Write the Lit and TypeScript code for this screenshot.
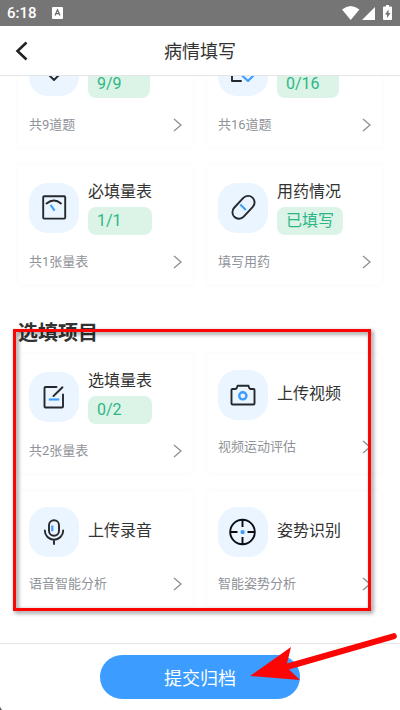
import { LitElement, html, css, svg, nothing, TemplateResult } from "lit";
import { customElement, property } from "lit/decorators.js";

const ICONS: Record<string, TemplateResult> = {
  shield: svg`<path d="M15 15l10-3 10 3v9L25 34 15 24z" /><path class="blue" d="M21 20l3 3 5-5" />`,
  checklist: svg`<path d="M34 21v-8H14v22h9" /><path class="blue" d="M24 29.5l6 5.5 6-6" />`,
  scale: svg`<rect x="14.2" y="13.2" width="22" height="22.4" rx="1" /><path d="M17.5 20.5Q25 14.5 32 20.5" /><path class="blue" d="M21.6 22l4 5.6" />`,
  pill: svg`<rect x="12.3" y="17.8" width="26.4" height="13" rx="6.5" transform="rotate(-47 25.5 24.3)" /><path class="blue" d="M22.3 21.6l5.6 5.4" />`,
  edit: svg`<path d="M27.5 15H16.5q-1 0-1 1V34.5q0 1 1 1H33q1 0 1-1V22.5" /><path d="M33.5 15.3l-9 8.7" /><path class="blue" d="M19.8 27.5h10.5" />`,
  camera: svg`<path d="M14.5 19h3q1.5-.5 2-3.2h11q.5 2.700 2 3.200h3q1 0 1 1V33.500q0 1-1 1h-21q-1 0-1-1V20q0-1 1-1z" /><circle class="blue thick" cx="24.800" cy="25.800" r="3.600" />`,
  mic: svg`<rect x="20" y="13.300" width="10" height="15.500" rx="5" /><path d="M15.800 23.500a9.200 9.200 0 0 0 18.400 0M25 32.700V37" /><path class="blue" d="M23.300 18.500v5.700" />`,
  target: svg`<g class="black"><circle cx="24.500" cy="25" r="12.300" /><path d="M24.500 13v7M24.500 30v7M12.500 25h7M29.500 25h7" /></g><rect class="dot" x="22.700" y="23.200" width="3.800" height="3.800" rx="1" />`,
};

@customElement("task-card")
class TaskCard extends LitElement {
  @property() icon = "";
  @property() name = "";
  @property() badge = "";
  @property() note = "";

  static styles = css`
    :host { display: block; }
    .card {
      display: block;
      box-sizing: border-box;
      height: 100%;
      padding: 16px 11px 12px;
      border-radius: 4px;
      background: #fff;
      box-shadow: 0 0 7px rgba(0, 0, 0, 0.03);
      color: #333;
      text-decoration: none;
    }
    .head { display: flex; align-items: center; gap: 9px; margin-bottom: 17px; }
    .tile { flex: none; width: 50px; height: 50px; border-radius: 19px; background: #eaf5ff; }
    .tile svg {
      display: block;
      fill: none;
      stroke: #25282c;
      stroke-width: 1.9;
      stroke-linecap: round;
      stroke-linejoin: round;
    }
    .tile .blue { stroke: #3c9cff; stroke-width: 2.1; stroke-linecap: butt; }
    .tile .thick { stroke-width: 2.4; }
    .tile .black { stroke: #0b0d12; stroke-linecap: butt; }
    .tile .dot { fill: #3c9cff; stroke: none; }
    .text { display: flex; flex-direction: column; gap: 4px; }
    .plain { padding-bottom: 2px; }
    .name { min-height: 22px; font-size: 16px; line-height: 22px; white-space: nowrap; }
    .badge {
      box-sizing: border-box;
      min-width: 62px;
      padding: 0 9px;
      border-radius: 8px;
      background: #dcf3e8;
      color: #2bb785;
      font-size: 16px;
      line-height: 28px;
      white-space: nowrap;
    }
    .foot {
      display: flex;
      align-items: center;
      justify-content: space-between;
      color: #909399;
      font-size: 13px;
      line-height: 20px;
    }
    .foot svg { fill: none; stroke: #8d9095; stroke-width: 1.3; }
  `;

  render() {
    return html`<a class="card" href="#">
      <div class="head">
        <span class="tile"><svg width="50" height="50" viewBox="0 0 50 50">${ICONS[this.icon]}</svg></span>
        <div class="text ${this.badge ? "" : "plain"}">
          <span class="name">${this.name}</span>
          ${this.badge ? html`<span class="badge">${this.badge}</span>` : nothing}
        </div>
      </div>
      <div class="foot">
        <span>${this.note}</span>
        <svg width="9" height="14" viewBox="0 0 9 14"><path d="M1 1l7 6-7 6" /></svg>
      </div>
    </a>`;
  }
}

const REQUIRED = [
  { icon: "shield", name: "", badge: "9/9", note: "共9道题" },
  { icon: "checklist", name: "", badge: "0/16", note: "共16道题" },
  { icon: "scale", name: "必填量表", badge: "1/1", note: "共1张量表" },
  { icon: "pill", name: "用药情况", badge: "已填写", note: "填写用药" },
];
const OPTIONAL = [
  { icon: "edit", name: "选填量表", badge: "0/2", note: "共2张量表" },
  { icon: "camera", name: "上传视频", badge: "", note: "视频运动评估" },
  { icon: "mic", name: "上传录音", badge: "", note: "语音智能分析" },
  { icon: "target", name: "姿势识别", badge: "", note: "智能姿势分析" },
];

@customElement("app-root")
class AppRoot extends LitElement {
  static styles = css`
    :host {
      display: flex;
      flex-direction: column;
      height: 100vh;
      overflow: hidden;
      background: #fff;
      color: #333;
      font-family: Roboto, "Noto Sans CJK SC", sans-serif;
    }
    .status {
      flex: none;
      display: flex;
      align-items: center;
      height: 26px;
      padding: 0 7px;
      background: #757575;
      color: #fff;
      font-size: 15px;
      font-weight: 500;
      line-height: 26px;
    }
    .input-mode { margin-left: 15px; }
    .signals { margin-left: auto; }
    .bar {
      flex: none;
      display: grid;
      grid-template-columns: 44px 1fr 44px;
      align-items: center;
      height: 49px;
      border-bottom: 1px solid #e6e6e6;
    }
    .back { padding: 0 0 0 15px; border: 0; background: none; height: 44px; }
    .back svg { display: block; fill: none; stroke: #222; stroke-width: 2.6; }
    h1 { margin: 0; padding-top: 2px; font-size: 18px; font-weight: 400; line-height: 28px; text-align: center; }
    main { flex: 1; min-height: 0; overflow-y: auto; padding: 0 18px 37px; scrollbar-width: none; }
    .cards { display: grid; grid-template-columns: 1fr 1fr; gap: 18px 14px; }
    h2 { margin: 35px 0 7px; font-size: 20px; font-weight: 700; line-height: 28px; }
    .optional { position: relative; }
    .frame {
      position: absolute;
      inset: 10px 11px -5px -5px;
      border: 3px solid #fb0505;
      filter: drop-shadow(2px 2px 2px rgba(0, 0, 0, 0.5));
      pointer-events: none;
    }
    footer {
      position: relative;
      flex: none;
      display: flex;
      justify-content: center;
      padding: 11px 0;
      border-top: 1px solid #e6e6e6;
    }
    .submit {
      width: 50%;
      height: 44px;
      padding: 0;
      border: 0;
      border-radius: 22px;
      background: #3c9cff;
      color: #fff;
      font: inherit;
      font-size: 18px;
    }
    .arrow { position: absolute; left: 62%; top: -14px; fill: #fb0505; pointer-events: none; }
    .corner { position: absolute; left: 0; bottom: 0; fill: #555; }
  `;

  async firstUpdated() {
    await Promise.all(
      Array.from(this.renderRoot.querySelectorAll("task-card"), (c) => (c as TaskCard).updateComplete),
    );
    const main = this.renderRoot.querySelector("main")!;
    main.scrollTop = main.scrollHeight;
  }

  private cards(list: typeof REQUIRED) {
    return html`<div class="cards">
      ${list.map(
        (t) => html`<task-card .icon=${t.icon} .name=${t.name} .badge=${t.badge} .note=${t.note}></task-card>`,
      )}
    </div>`;
  }

  render() {
    return html`
      <div class="status">
        <span>6:18</span>
        <svg class="input-mode" width="11" height="12" viewBox="0 0 11 12">
          <rect width="11" height="12" rx="1" fill="#fff" />
          <path d="M3 8.500L5.500 2.800 8 8.500M4 6.700h3" fill="none" stroke="#666" stroke-width="1.200" />
        </svg>
        <svg class="signals" width="51" height="16" viewBox="0 0 51 16" fill="#fff">
          <path d="M0 4.500Q8.700-2.500 17.400 4.500L8.700 15z" />
          <path d="M33 2v13H20z" />
          <path d="M44 0h3v1.500h2q1 0 1 1V14q0 1-1 1h-7q-1 0-1-1V2.500q0-1 1-1h2z" />
          <path d="M46.500 4.500l-3.500 5h2V13l3.500-5h-2z" fill="#757575" />
        </svg>
      </div>
      <header class="bar">
        <button class="back" aria-label="返回">
          <svg width="13" height="20" viewBox="0 0 13 20"><path d="M11.500 1.500L2.500 10l9 8.500" /></svg>
        </button>
        <h1>病情填写</h1>
      </header>
      <main>
        ${this.cards(REQUIRED)}
        <section class="optional">
          <h2>选填项目</h2>
          ${this.cards(OPTIONAL)}
          <div class="frame"></div>
        </section>
      </main>
      <footer>
        <button class="submit">提交归档</button>
        <svg class="arrow" width="150" height="54" viewBox="0 0 150 54">
          <path d="M2 46L43 17 39 33.500 144.500 3.500A3 3 0 0 1 147 9L41 39.500 52 50z" />
        </svg>
        <svg class="corner" width="2" height="3" viewBox="0 0 2 3"><path d="M0 0L2 3H0z" /></svg>
      </footer>
    `;
  }
}
